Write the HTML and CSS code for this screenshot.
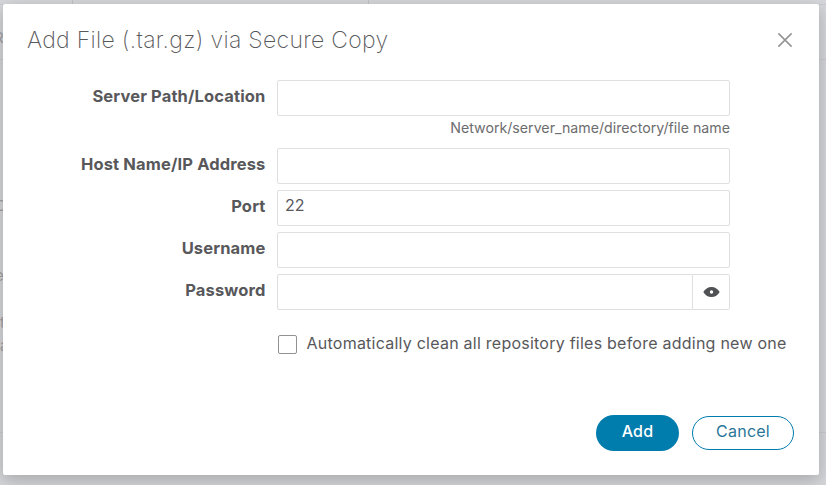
FILE: index.html
```html
<!DOCTYPE html>
<html lang="en">
  <head>
    <meta charset="UTF-8" />
    <meta name="viewport" content="width=device-width, initial-scale=1.0" />
    <title>Add File via Secure Copy</title>
    <link rel="stylesheet" href="styles.css">
  </head>
  <body>
    <div class="page-behind" aria-hidden="true">
      <div class="page-tabs">
        <span class="page-tab"></span>
        <span class="page-tab page-tab--wide"></span>
      </div>
      <div class="page-header">R</div>
      <div class="page-row page-row--first">C</div>
      <div class="page-row">e</div>
      <div class="page-row page-row--last">t<br>a</div>
    </div>

    <div class="modal" role="dialog" aria-labelledby="modal-title">
      <div class="modal-header">
        <h1 class="modal-title" id="modal-title">Add File (.tar.gz) via Secure Copy</h1>
        <button class="modal-close" type="button" aria-label="Close">
          <svg width="16" height="16" viewBox="0 0 16 16">
            <path d="M1.400 1.400l13.200 13.200M14.600 1.400L1.400 14.600" />
          </svg>
        </button>
      </div>

      <form class="modal-form">
        <div class="form-row form-row--hint">
          <label for="path">Server Path/Location</label>
          <div class="form-field">
            <input id="path" class="form-input" type="text">
            <p class="form-hint">Network/server_name/directory/file name</p>
          </div>
        </div>
        <div class="form-row">
          <label for="host">Host Name/IP Address</label>
          <input id="host" class="form-input" type="text">
        </div>
        <div class="form-row">
          <label for="port">Port</label>
          <input id="port" class="form-input" type="text" value="22">
        </div>
        <div class="form-row">
          <label for="username">Username</label>
          <input id="username" class="form-input" type="text">
        </div>
        <div class="form-row">
          <label for="password">Password</label>
          <div class="form-group">
            <input id="password" class="form-input" type="password">
            <button class="form-reveal" type="button" aria-label="Show password">
              <svg width="17" height="12" viewBox="0 0 17 12">
                <path fill-rule="evenodd" d="M.3 6C2 3 5 1 8.500 1s6.500 2 8.200 5c-1.700 3-4.700 5-8.200 5S2 9 .3 6zM8.500 4.300a1.700 1.700 0 1 0 0 3.400 1.700 1.700 0 0 0 0-3.400z" />
              </svg>
            </button>
          </div>
        </div>

        <label class="form-check">
          <input type="checkbox">
          <span>Automatically clean all repository files before adding new one</span>
        </label>

        <div class="modal-footer">
          <button class="btn btn--primary" type="button">Add</button>
          <button class="btn btn--ghost" type="button">Cancel</button>
        </div>
      </form>
    </div>
  </body>
</html>
```
FILE: styles.css
```css
:root {
  --color-primary: #007cad;
  --color-text: #58585b;
  --color-border: #dfdfdf;
}
* {
  box-sizing: border-box;
}
body {
  margin: 0;
  height: 485px;
  padding: 4px 7px 10px 3px;
  overflow: hidden;
  background: #d7d8db;
  color: var(--color-text);
  font-family: Inter, "Liberation Sans", sans-serif;
  font-size: 16px;
}
button {
  padding: 0;
  border: 0;
  background: none;
  font: inherit;
}

/* dimmed page under the dialog */
.page-behind {
  position: absolute;
  inset: 0;
  overflow: hidden;
  color: #a3a3a6;
  font-size: 15px;
  line-height: 23px;
}
.page-tabs {
  display: flex;
  height: 5px;
  border-bottom: 1px solid #cdcdd1;
}
.page-tab {
  width: 73px;
  border-right: 1px solid #c5c5ca;
}
.page-tab--wide {
  width: 296px;
}
.page-header {
  height: 55px;
  padding-top: 21px;
  border-bottom: 1px solid #cdcdd1;
  text-indent: -6px;
}
.page-row {
  height: 70px;
  text-indent: -5px;
}
.page-row--first {
  height: 204px;
  padding-top: 134px;
}
.page-row--last {
  height: 122px;
  margin-top: -23px;
  border-bottom: 1px solid #cdcdd1;
  text-indent: 0;
}

.modal {
  position: relative;
  height: 471px;
  border-radius: 2px;
  background: #fff;
  box-shadow: 0 5px 18px 1px rgba(0, 0, 0, 0.22);
}
.modal-header {
  display: flex;
  justify-content: space-between;
  align-items: center;
  height: 76px;
  padding: 0 26px 4px 24px;
}
.modal-title {
  margin: 0;
  font-size: 23px;
  font-weight: 200;
  line-height: 30px;
  letter-spacing: 0.31px;
}
.modal-close {
  display: flex;
}
.modal-close svg {
  fill: none;
  stroke: #929293;
  stroke-width: 1.5;
}

.form-row {
  display: grid;
  grid-template-columns: 262.5px 453px;
  column-gap: 11.5px;
  height: 36px;
  margin-bottom: 6px;
}
.form-row--hint {
  height: 62px;
}
.form-row label {
  padding-top: 6px;
  font-size: 16.5px;
  font-weight: 650;
  line-height: 20px;
  letter-spacing: 0.14px;
  text-align: right;
}
.form-input {
  display: block;
  width: 100%;
  height: 36px;
  padding: 0 7px 7px;
  border: 1px solid var(--color-border);
  border-radius: 2px;
  outline: 0;
  background: #fff;
  color: var(--color-text);
  font: inherit;
}
.form-hint {
  margin: 2px 0 0;
  font-size: 14.2px;
  line-height: 20px;
  text-align: right;
  color: #6c6c6e;
}
.form-group {
  display: flex;
}
.form-group .form-input {
  border-radius: 2px 0 0 2px;
}
.form-reveal {
  display: flex;
  flex: 0 0 37px;
  justify-content: center;
  align-items: center;
  padding: 0 0 1px;
  border: 1px solid var(--color-border);
  border-left: 0;
  border-radius: 0 2px 2px 0;
  fill: #4f5154;
}
.form-check {
  display: flex;
  align-items: center;
  height: 20px;
  margin: 24px 0 0 275px;
  letter-spacing: 0.24px;
  white-space: nowrap;
}
.form-check input {
  appearance: none;
  flex: none;
  width: 19px;
  height: 19px;
  margin: 0 9.5px 0 0;
  border: 1px solid #929294;
  border-radius: 2px;
}
.form-check span {
  padding-bottom: 2px;
}

.modal-footer {
  display: flex;
  justify-content: flex-end;
  align-items: center;
  gap: 13px;
  margin: 61px 25px 0 0;
}
.btn {
  height: 36px;
  padding-bottom: 4px;
  border-radius: 18px;
  letter-spacing: 0.25px;
}
.btn--primary {
  width: 83px;
  background: var(--color-primary);
  color: #fff;
  font-weight: 550;
}
.btn--ghost {
  width: 102px;
  height: 34px;
  border: 1px solid var(--color-primary);
  color: #2a7699;
}
```
